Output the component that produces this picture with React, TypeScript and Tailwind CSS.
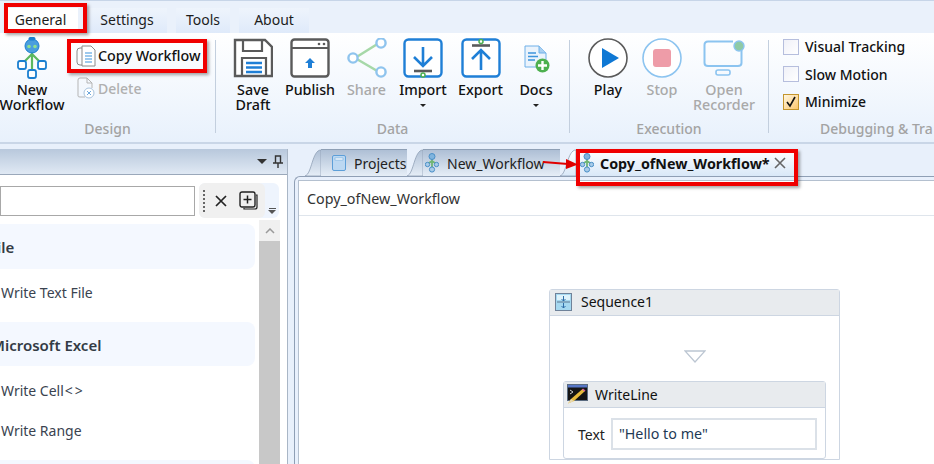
import type { ReactNode } from 'react';

const FONT = "font-['Noto_Sans','Open_Sans',sans-serif]";

function NewWorkflowIcon() {
  return (
    <svg width="32" height="42" viewBox="0 0 32 42" fill="none">
      <path d="M16 14V34M16 17L7 26M16 17L25 26" stroke="#5cb85f" strokeWidth="2.2" />
      <circle cx="16" cy="9" r="7" fill="#4a9ede" stroke="#1b7fd0" />
      <rect x="12.5" y="0" width="7" height="3.5" rx="1.7" fill="#1b7fd0" />
      <circle cx="13" cy="9.5" r="1.8" fill="#8fe08f" />
      <circle cx="19" cy="9.5" r="1.8" fill="#8fe08f" />
      <rect x="2" y="24" width="8" height="8" rx="2" fill="#fff" stroke="#1b7fd0" strokeWidth="1.8" />
      <rect x="22" y="24" width="8" height="8" rx="2" fill="#fff" stroke="#1b7fd0" strokeWidth="1.8" />
      <rect x="12" y="33" width="8" height="8" rx="2" fill="#fff" stroke="#1b7fd0" strokeWidth="1.8" />
    </svg>
  );
}

function CopyIcon() {
  return (
    <svg width="20" height="22" viewBox="0 0 20 22" fill="none">
      <rect x="1" y="3" width="12" height="17" rx="3" stroke="#8a8a8a" />
      <path d="M6 1H15L19 5V21H6Z" fill="#fff" stroke="#8a8a8a" />
      <path d="M9 8H16M9 11H16M9 14H16M9 17H16" stroke="#3d94dc" strokeWidth="1.2" />
    </svg>
  );
}

function DeleteIcon() {
  return (
    <svg width="20" height="22" viewBox="0 0 20 22" fill="none">
      <path d="M2 19V3Q2 1 4 1H11L16 6V11M11 1V6H16" stroke="#b5b5b5" />
      <path d="M2 19Q2 20 4 20H9" stroke="#b5b5b5" />
      <circle cx="13" cy="16" r="5" fill="#fff" stroke="#a9c3dc" />
      <path d="M11 14L15 18M15 14L11 18" stroke="#6fa8dc" />
    </svg>
  );
}

function SaveIcon() {
  return (
    <svg width="40" height="40" viewBox="0 0 40 40" fill="none">
      <path d="M2 2H32L39 9V38H2Z" stroke="#5a5a5a" strokeWidth="2.4" fill="#fff" />
      <path d="M10 2V13H29V2" stroke="#5a5a5a" strokeWidth="2.2" />
      <path d="M9 38V20H33V38" stroke="#5a5a5a" strokeWidth="2.2" />
      <path d="M13 25H29M13 29.5H29M13 34H29" stroke="#1f7fd6" strokeWidth="2.4" />
    </svg>
  );
}

function PublishIcon() {
  return (
    <svg width="40" height="40" viewBox="0 0 40 40" fill="none">
      <rect x="1.5" y="1.5" width="37" height="37" rx="3" stroke="#5a5a5a" strokeWidth="2.4" fill="#fff" />
      <path d="M1.5 10H38.5" stroke="#5a5a5a" strokeWidth="2.2" />
      <circle cx="29" cy="6" r="1.3" fill="#5a5a5a" />
      <circle cx="34" cy="6" r="1.3" fill="#5a5a5a" />
      <path d="M20 20L25 25H22V30H18V25H15Z" fill="#1f7fd6" />
    </svg>
  );
}

function ShareIcon() {
  return (
    <svg width="40" height="40" viewBox="0 0 40 40" fill="none">
      <path d="M8 20L32 5M8 20L32 34" stroke="#a6d8a8" strokeWidth="2.6" />
      <circle cx="6" cy="20" r="4.6" fill="#fff" stroke="#8fc4ee" strokeWidth="2.4" />
      <circle cx="34" cy="5" r="4.6" fill="#fff" stroke="#8fc4ee" strokeWidth="2.4" />
      <circle cx="34" cy="34" r="4.6" fill="#fff" stroke="#8fc4ee" strokeWidth="2.4" />
    </svg>
  );
}

function ImportIcon() {
  return (
    <svg width="40" height="40" viewBox="0 0 40 40" fill="none">
      <rect x="1.5" y="1.5" width="37" height="37" rx="4" stroke="#1f7fd6" strokeWidth="2.4" fill="#fff" />
      <path d="M20 9V28M11 19L20 28L29 19" stroke="#1f7fd6" strokeWidth="2.6" />
      <path d="M11 33H29" stroke="#5a5a5a" strokeWidth="2.6" />
      <circle cx="20" cy="37" r="2" fill="#fff" stroke="#4caf50" strokeWidth="1.5" />
    </svg>
  );
}

function ExportIcon() {
  return (
    <svg width="40" height="40" viewBox="0 0 40 40" fill="none">
      <rect x="1.5" y="1.5" width="37" height="37" rx="4" stroke="#1f7fd6" strokeWidth="2.4" fill="#fff" />
      <path d="M20 32V12M11 21L20 12L29 21" stroke="#1f7fd6" strokeWidth="2.6" />
      <path d="M11 7.5H29" stroke="#5a5a5a" strokeWidth="2.6" />
      <circle cx="20" cy="3.5" r="2" fill="#fff" stroke="#4caf50" strokeWidth="1.5" />
    </svg>
  );
}

function DocsIcon() {
  return (
    <svg width="28" height="30" viewBox="0 0 28 30" fill="none">
      <path d="M3 3H17L24 10V24H3Z" fill="#eaf3fc" stroke="#6fb0e8" />
      <path d="M17 3V10H24" fill="#a9d0f2" stroke="#6fb0e8" />
      <path d="M6 10H14M6 13.5H16M6 17H13" stroke="#3d94dc" strokeWidth="1.3" />
      <circle cx="20.5" cy="22.5" r="7" fill="#4db04f" />
      <path d="M20.5 18V27M16 22.5H25" stroke="#fff" strokeWidth="2.4" />
    </svg>
  );
}

function PlayIcon() {
  return (
    <svg width="40" height="40" viewBox="0 0 40 40" fill="none">
      <circle cx="20" cy="20" r="19" stroke="#5a5a5a" strokeWidth="1.6" fill="#fff" />
      <path d="M14 10L31 20L14 30Z" fill="#0f78d4" />
    </svg>
  );
}

function StopIcon() {
  return (
    <svg width="40" height="40" viewBox="0 0 40 40" fill="none">
      <circle cx="20" cy="20" r="19" stroke="#8cc4f0" strokeWidth="1.6" fill="#fff" />
      <rect x="11" y="11" width="18" height="18" rx="3" fill="#ee9ca8" />
    </svg>
  );
}

function RecorderIcon() {
  return (
    <svg width="42" height="36" viewBox="0 0 42 36" fill="none">
      <path d="M30 1.5H5Q1.5 1.5 1.5 5V23Q1.5 26 5 26H35Q38.5 26 38.5 23V10" stroke="#8cc4f0" strokeWidth="2" />
      <rect x="13" y="30" width="14" height="5" rx="2" stroke="#8cc4f0" strokeWidth="1.6" />
      <circle cx="36" cy="6" r="5" fill="#8fcaa6" stroke="#8cc4f0" strokeWidth="1.4" />
    </svg>
  );
}

function TreeIcon() {
  return (
    <svg width="14" height="20" viewBox="0 0 14 20" fill="none">
      <path d="M7 5V15M7 8L2.5 11M7 8L11.5 11" stroke="#6fb573" strokeWidth="1.8" />
      <circle cx="7" cy="3.5" r="3" fill="#7fb4de" stroke="#4a8fc7" />
      <circle cx="2.5" cy="11.5" r="2.2" fill="#a8cbe8" stroke="#4a8fc7" />
      <circle cx="11.5" cy="11.5" r="2.2" fill="#a8cbe8" stroke="#4a8fc7" />
      <circle cx="7" cy="16.5" r="2.6" fill="#a8cbe8" stroke="#4a8fc7" />
    </svg>
  );
}

function ProjectIcon() {
  return (
    <svg width="14" height="16" viewBox="0 0 14 16" fill="none">
      <rect x="0.5" y="0.5" width="13" height="15" rx="1.5" fill="#bcd8f2" stroke="#5d9fd8" />
      <rect x="3" y="3" width="8" height="2" fill="#fff" stroke="#5d9fd8" strokeWidth="0.5" />
    </svg>
  );
}

function SequenceIcon() {
  return (
    <svg width="17" height="18" viewBox="0 0 17 18" fill="none">
      <rect x="0.5" y="0.5" width="16" height="17" fill="#a5d8f0" stroke="#6f8299" />
      <rect x="2" y="2" width="13" height="5" fill="#dff3fb" />
      <path d="M2 9H15" stroke="#5d7690" />
      <path d="M8.5 3V8M6.5 6L8.5 8L10.5 6M8.5 10V15M6.5 13L8.5 15L10.5 13" stroke="#2f6ea8" />
    </svg>
  );
}

function WriteLineIcon() {
  return (
    <svg width="21" height="20" viewBox="0 0 21 20" fill="none">
      <rect x="0.5" y="0.5" width="20" height="16" fill="#141414" stroke="#5a6b80" />
      <rect x="1" y="1" width="19" height="2.5" fill="#5676c6" />
      <path d="M3 6L6 8L3 10" stroke="#cfcfcf" />
      <path d="M1 19.5L4 15L15.5 5L18 7L7 17Z" fill="#e7b93a" />
      <path d="M1 19.5L4 15L7 17Z" fill="#e8d9b0" />
      <path d="M15.5 5L18 7" stroke="#d85ca0" strokeWidth="1.6" />
    </svg>
  );
}

function RibbonTab({ label, active, width }: { label: string; active?: boolean; width: string }) {
  return (
    <div
      className={`flex h-[25px] items-center justify-center pb-[3px] text-[14px] text-[#1c1c1c] ${width} ${
        active ? 'bg-white pr-[4px]' : 'bg-gradient-to-b from-[#eef4fc] to-[#dfeafa]'
      }`}
    >
      {label}
    </div>
  );
}

function BigButton({
  icon,
  lines,
  width,
  disabled,
  menu,
}: {
  icon: ReactNode;
  lines: string[];
  width: string;
  disabled?: boolean;
  menu?: boolean;
}) {
  return (
    <div className={`flex shrink-0 flex-col items-center ${width}`}>
      <div className="flex h-[41px] items-center justify-center">{icon}</div>
      <div className={`mt-[4px] whitespace-nowrap text-center text-[14.3px] font-medium leading-[15px] ${disabled ? 'text-[#a9a9a9]' : 'text-[#111]'}`}>
        {lines.map((line) => (
          <div key={line}>{line}</div>
        ))}
      </div>
      {menu && <div className="mt-[7px] h-0 w-0 border-x-[3px] border-t-[3px] border-x-transparent border-t-[#222]" />}
    </div>
  );
}

function GroupLabel({ children }: { children: ReactNode }) {
  return <div className="absolute bottom-[3px] left-0 right-0 text-center text-[14px] font-medium text-[#a3a3a3]">{children}</div>;
}

function Separator() {
  return <div className="mb-[9px] mt-[7px] w-px shrink-0 bg-[#c3cfde]" />;
}

function Check({ label, checked }: { label: string; checked?: boolean }) {
  return (
    <div className="flex h-[27.5px] items-center gap-[6px]">
      <div
        className={`flex h-[16px] w-[16px] items-center justify-center border ${
          checked ? 'border-[#c4952c] bg-gradient-to-br from-[#fff6df] to-[#fbc668]' : 'border-[#b6bedd] bg-gradient-to-br from-[#f0f1f8] to-white'
        }`}
      >
        {checked && (
          <svg width="12" height="12" viewBox="0 0 12 12" fill="none">
            <path d="M2 6L5 10L10 1" stroke="#111" strokeWidth="1.6" />
          </svg>
        )}
      </div>
      <span className="whitespace-nowrap text-[14px] font-medium text-[#111]">{label}</span>
    </div>
  );
}

function DocTab({
  slant,
  width,
  active,
  icon,
  label,
  iconGap,
  trailing,
}: {
  slant: string;
  width: string;
  active?: boolean;
  icon: ReactNode;
  label: string;
  iconGap: string;
  trailing?: ReactNode;
}) {
  const gradientId = `${slant}-grad`;
  return (
    <div className="flex h-[27px] shrink-0">
      <svg width="16" height="27" viewBox="0 0 16 27" className="shrink-0">
        <defs>
          <linearGradient id={gradientId} x1="0" y1="0" x2="0" y2="1">
            <stop offset="0" stopColor={active ? '#ffffff' : '#aebfd5'} />
            <stop offset="1" stopColor={active ? '#d9e8f8' : '#e6eef7'} />
          </linearGradient>
        </defs>
        <path d="M0 27C7 25 7 1 16 1V27Z" fill={`url(#${gradientId})`} stroke="#8fa0b5" strokeWidth="0.8" />
      </svg>
      <div
        className={`flex items-center overflow-hidden border-t border-[#8fa0b5] ${iconGap} ${width} ${
          active ? 'bg-gradient-to-b from-white to-[#d9e8f8] font-bold text-[#111]' : 'bg-gradient-to-b from-[#aebfd5] to-[#e6eef7] text-[#222]'
        }`}
      >
        {icon}
        <span className={`whitespace-nowrap ${active ? 'ml-[6px] pt-[2px] text-[14.3px]' : 'ml-[8px] text-[14px]'}`}>{label}</span>
        {trailing}
      </div>
    </div>
  );
}

function ListCard({ height, children }: { height: string; children?: ReactNode }) {
  return (
    <div className={`flex w-[255px] shrink-0 items-center overflow-hidden rounded-r-lg bg-[#f4f8ff] pt-[2px] text-[15px] font-semibold text-[#333b45] ${height}`}>
      {children}
    </div>
  );
}

function ListItem({ children }: { children: ReactNode }) {
  return <div className="flex h-[40px] shrink-0 items-center pb-[2px] pl-[1px] text-[14px] text-[#3a4350]">{children}</div>;
}

export default function App() {
  return (
    <div className={`relative flex h-[464px] w-[934px] flex-col overflow-hidden bg-[#e8f0fb] ${FONT}`}>
      {/* Ribbon tabs */}
      <div className="flex h-[33px] shrink-0 items-end gap-[9px] border-t border-[#c7d5e8] bg-[#eaf1fb] pl-[7px]">
        <RibbonTab label="General" active width="w-[71px]" />
        <RibbonTab label="Settings" width="w-[80px]" />
        <RibbonTab label="Tools" width="w-[54px]" />
        <RibbonTab label="About" width="w-[70px]" />
      </div>

      {/* Ribbon */}
      <div className="flex h-[111px] shrink-0 border-b-2 border-[#c9d6e7] bg-gradient-to-b from-white to-[#e8f1fc]">
        <div className="relative flex w-[215px] shrink-0 pt-[4px]">
          <BigButton icon={<NewWorkflowIcon />} lines={['New', 'Workflow']} width="w-[64px]" />
          <div className="flex flex-col pl-[12px] pt-[6px]">
            <div className="flex h-[26px] items-center gap-[2px] text-[14.3px] font-medium text-[#111]">
              <CopyIcon />
              <span className="whitespace-nowrap">Copy Workflow</span>
            </div>
            <div className="mt-[7px] flex h-[24px] items-center gap-[2px] text-[14px] font-medium text-[#b0b0b0]">
              <DeleteIcon />
              <span>Delete</span>
            </div>
          </div>
          <GroupLabel>Design</GroupLabel>
        </div>
        <Separator />
        <div className="relative flex w-[353px] shrink-0 pl-[9px] pt-[4px]">
          <BigButton icon={<SaveIcon />} lines={['Save', 'Draft']} width="w-[56px]" />
          <BigButton icon={<PublishIcon />} lines={['Publish']} width="w-[58px]" />
          <BigButton icon={<ShareIcon />} lines={['Share']} width="w-[55px]" disabled />
          <BigButton icon={<ImportIcon />} lines={['Import']} width="w-[58px]" menu />
          <BigButton icon={<ExportIcon />} lines={['Export']} width="w-[57px]" />
          <BigButton icon={<DocsIcon />} lines={['Docs']} width="w-[54px]" menu />
          <GroupLabel>Data</GroupLabel>
        </div>
        <Separator />
        <div className="relative flex w-[198px] shrink-0 pl-[11px] pt-[4px]">
          <BigButton icon={<PlayIcon />} lines={['Play']} width="w-[54px]" />
          <BigButton icon={<StopIcon />} lines={['Stop']} width="w-[54px]" disabled />
          <BigButton icon={<RecorderIcon />} lines={['Open', 'Recorder']} width="w-[70px]" disabled />
          <GroupLabel>Execution</GroupLabel>
        </div>
        <Separator />
        <div className="relative flex flex-1 pl-[14px]">
          <div className="flex flex-col">
            <Check label="Visual Tracking" />
            <Check label="Slow Motion" />
            <Check label="Minimize" checked />
          </div>
          <div className="ml-[35px] mt-[48px] text-[14px] font-medium text-[#111]">B</div>
          <div className="absolute bottom-[3px] left-[51px] whitespace-nowrap text-[14px] font-medium text-[#a3a3a3]">Debugging &amp; Tra</div>
        </div>
      </div>

      {/* Workspace */}
      <div className="flex min-h-0 flex-1 pt-[5px]">
        {/* Toolbox panel */}
        <div className="flex w-[288px] shrink-0 flex-col border-r border-[#a9b6c6] bg-white">
          <div className="flex h-[26px] shrink-0 items-center justify-end gap-[6px] border-b border-[#9aa8ba] bg-gradient-to-b from-[#b8c8dc] to-[#e0e9f4] pr-[4px]">
            <div className="h-0 w-0 border-x-[5px] border-t-[5px] border-x-transparent border-t-[#333]" />
            <svg width="10" height="13" viewBox="0 0 10 13" fill="none">
              <path d="M2.5 1H7.5V8H2.5ZM0 8H10M5 8V13" stroke="#333" strokeWidth="1.4" />
            </svg>
          </div>
          <div className="flex h-[45px] shrink-0 items-start pt-[8px]">
            <div className="mt-[3px] h-[30px] w-[195px] shrink-0 border border-[#a8a8a8] bg-white" />
            <div className="ml-[4px] flex h-[35px] w-[80px] shrink-0 rounded-md bg-[#eef4fd]">
              <div className="flex w-[66px] items-center gap-[9px] rounded-md bg-[#f0f0f0] pl-[4px]">
                <div className="h-[22px] w-[2px] border-l-2 border-dotted border-[#666]" />
                <svg width="14" height="14" viewBox="0 0 14 14" fill="none">
                  <path d="M2 2L12 12M12 2L2 12" stroke="#222" strokeWidth="1.7" />
                </svg>
                <svg width="19" height="19" viewBox="0 0 19 19" fill="none" className="ml-[2px]">
                  <path d="M17 4H18V16Q18 18 16 18H5V17" stroke="#222" strokeWidth="1.2" />
                  <rect x="1" y="1" width="15" height="15" rx="2" stroke="#222" strokeWidth="1.4" />
                  <path d="M8.5 4.5V12.5M4.5 8.5H12.5" stroke="#222" strokeWidth="1.5" />
                </svg>
              </div>
              <div className="flex flex-1 flex-col items-center justify-end gap-[1px] pb-[4px]">
                <div className="h-px w-[7px] bg-[#555]" />
                <div className="h-0 w-0 border-x-[4px] border-t-[4px] border-x-transparent border-t-[#555]" />
              </div>
            </div>
          </div>
          <div className="flex min-h-0 flex-1">
            <div className="flex w-[259px] shrink-0 flex-col overflow-hidden pt-[4px]">
              <ListCard height="h-[45px]">
                <span className="-ml-[11px]">File</span>
              </ListCard>
              <div className="flex h-[48px] shrink-0 items-center pb-[2px] pl-[1px] text-[14px] text-[#3a4350]">Write Text File</div>
              <div className="mt-[5px]">
                <ListCard height="h-[44px]">
                  <span className="-ml-[9px] whitespace-nowrap">Microsoft Excel</span>
                </ListCard>
              </div>
              <div className="mt-[5px]">
                <ListItem>
                  Write Cell<span className="ml-[1px] tracking-[2px]">&lt;&gt;</span>
                </ListItem>
                <ListItem>Write Range</ListItem>
              </div>
              <div className="mt-[9px]">
                <ListCard height="h-[44px]" />
              </div>
            </div>
            <div className="flex w-[21px] shrink-0 flex-col bg-[#c8c8c8]">
              <div className="flex h-[21px] items-center justify-center bg-[#f0f0f0]">
                <svg width="10" height="6" viewBox="0 0 10 6" fill="none">
                  <path d="M1 5L5 1L9 5" stroke="#9a9a9a" strokeWidth="1.5" />
                </svg>
              </div>
            </div>
          </div>
        </div>

        {/* Document area */}
        <div className="flex min-w-0 flex-1 flex-col pl-[6px]">
          <div className="flex h-[27px] shrink-0 pl-[11px]">
            <DocTab slant="projects" width="w-[86px]" iconGap="pl-[11px]" icon={<ProjectIcon />} label="Projects" />
            <DocTab slant="workflow" width="w-[137px]" iconGap="pl-[2px]" icon={<TreeIcon />} label="New_Workflow" />
            <DocTab
              slant="copy"
              width="w-[222px]"
              active
              iconGap="pl-[4px]"
              icon={<TreeIcon />}
              label="Copy_ofNew_Workflow*"
              trailing={
                <svg width="12" height="12" viewBox="0 0 12 12" fill="none" className="ml-[4px] shrink-0">
                  <path d="M1 1L11 11M11 1L1 11" stroke="#666" strokeWidth="1.6" />
                </svg>
              }
            />
          </div>
          <div className="flex min-h-0 flex-1 flex-col rounded-tl-md border-l border-t border-[#8f9fb5] bg-[#e8f0fc] pl-[3px] pt-[3px]">
            <div className="flex min-h-0 flex-1 flex-col border-l border-t border-[#b4c0cf] bg-white">
              <div className="flex h-[35px] shrink-0 items-center border-b border-[#dfe5ec] pl-[8px] pt-[2px] text-[14.3px] text-[#333]">Copy_ofNew_Workflow</div>
              <div className="min-h-0 flex-1 pl-[250px] pt-[73px]">
                <div className="w-[291px] rounded-t-[3px] border border-[#cdd6e2] bg-white">
                  <div className="flex h-[26px] items-center gap-[9px] border-b border-[#cdd6e2] bg-[#e8ebee] pb-[2px] pl-[5px] text-[14px] text-[#111]">
                    <SequenceIcon />
                    <span>Sequence1</span>
                  </div>
                  <div className="flex flex-col items-center pt-[34px]">
                    <svg width="22" height="13" viewBox="0 0 22 13" fill="none">
                      <path d="M1 1H21L11 12Z" stroke="#bcc6d2" strokeWidth="1.3" />
                    </svg>
                  </div>
                  <div className="ml-[13px] mt-[18px] w-[263px] rounded-[3px] border border-[#cdd6e2] bg-white">
                    <div className="flex h-[26px] items-center gap-[7px] border-b border-[#cdd6e2] bg-[#e8ebee] pb-[1px] pl-[3px] text-[14px] text-[#111]">
                      <WriteLineIcon />
                      <span>WriteLine</span>
                    </div>
                    <div className="flex h-[50px] items-center pl-[14px] pt-[2px]">
                      <span className="text-[14px] text-[#222]">Text</span>
                      <div className="ml-[6px] flex h-[32px] w-[206px] items-center border-2 border-[#dbe1e8] pl-[6px] text-[14.3px] text-[#1f3a55]">
                        "Hello to me"
                      </div>
                    </div>
                  </div>
                </div>
              </div>
            </div>
          </div>
        </div>
      </div>

      {/* Red annotation boxes */}
      <div className="absolute left-[4px] top-[3px] h-[30px] w-[83px] border-[4px] border-[#f00000] shadow-[2px_2px_3px_rgba(0,0,0,0.35)]" />
      <div className="absolute left-[67px] top-[39px] h-[34px] w-[140px] border-[4px] border-[#f00000] shadow-[2px_2px_3px_rgba(0,0,0,0.35)]" />
      <div className="absolute left-[576px] top-[149px] h-[37px] w-[222px] border-[4px] border-[#f00000] shadow-[2px_2px_3px_rgba(0,0,0,0.35)]" />
      <svg width="38" height="12" viewBox="0 0 38 12" fill="none" className="absolute left-[542px] top-[158px]">
        <path d="M1 4L26 6" stroke="#e00000" strokeWidth="2" />
        <path d="M24 1L36 6.5L24 11Z" fill="#e00000" />
      </svg>
    </div>
  );
}
